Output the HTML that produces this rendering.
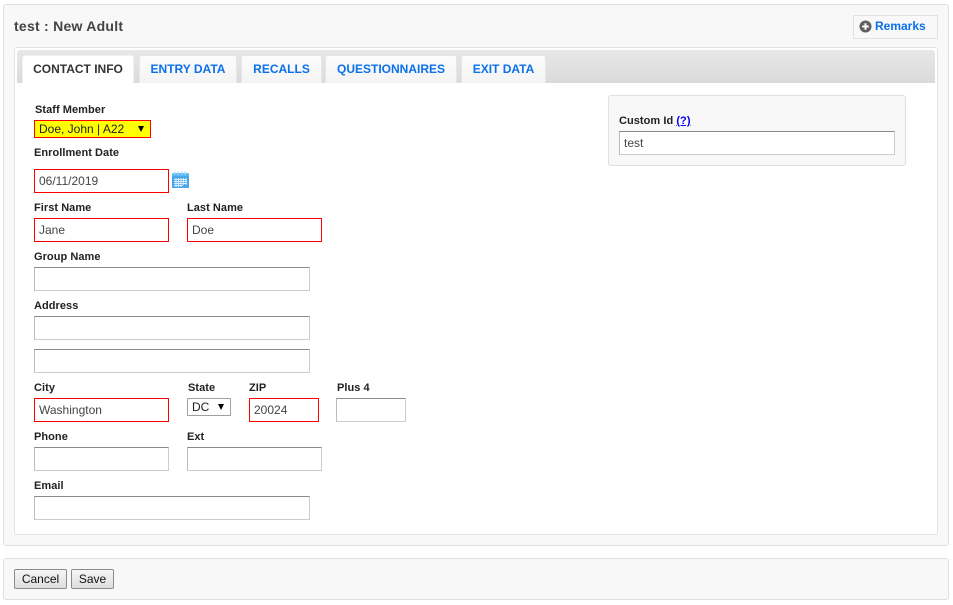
<!DOCTYPE html>
<html>
<head>
<meta charset="utf-8">
<style>
html,body{margin:0;padding:0;background:#fff;width:953px;height:605px;overflow:hidden}
body{position:relative;font-family:"Liberation Sans",Arial,sans-serif;font-size:12px;color:#333}
.a,.p,.l,.i,.t,.s,.b{position:absolute;box-sizing:border-box}
.p{background:#f8f8f8;border:1px solid #e0e0e0;border-radius:3px}
.l{font-weight:bold;font-size:11px;line-height:14px;height:14px;margin-top:1px;color:#222;letter-spacing:.05px;white-space:nowrap}
.i{height:24px;background:#fff;border:1px solid #cdcdcd;border-top-color:#8a8a8a;border-left-color:#bcbcbc;line-height:22px;padding-left:4px;color:#444;font-size:12px}
.r{border:1px solid #f00}
.t{top:55px;height:28px;background:linear-gradient(#fcfcfc,#f4f4f4);border:1px solid #e6e6e6;border-bottom:0;border-radius:3px 3px 0 0;text-align:center;font-weight:bold;font-size:12px;line-height:26px;color:#0b70ea;letter-spacing:0;white-space:nowrap}
.s{font-size:12px;line-height:16px;white-space:nowrap;color:#222}
.b{top:569px;height:20px;background:linear-gradient(#f6f6f6,#dedede);border:1px solid #8c8c8c;border-radius:2px;text-align:center;line-height:18px;font-size:12px;color:#111}
</style>
</head>
<body>
<div class="p" style="left:3px;top:4px;width:946px;height:542px"></div>
<div class="a" style="left:14px;top:19px;font-weight:bold;font-size:14px;line-height:15px;color:#444;letter-spacing:.25px;white-space:nowrap">test : New Adult</div>

<div class="a" style="left:853px;top:15px;width:85px;height:24px;border:1px solid #e2e2e2;background:#f8f8f8"></div>
<svg class="a" style="left:859px;top:20px" width="13" height="13" viewBox="0 0 13 13"><circle cx="6.5" cy="6.5" r="6" fill="#5f5f5f"/><path d="M6.5 3.2v6.6M3.2 6.5h6.6" stroke="#fff" stroke-width="2"/></svg>
<div class="a" style="left:875px;top:19px;font-weight:bold;font-size:12px;line-height:15px;color:#0b70ea;white-space:nowrap">Remarks</div>

<div class="a" style="left:14px;top:47px;width:924px;height:488px;background:#fff;border:1px solid #e2e2e2;border-radius:3px"></div>
<div class="a" style="left:17px;top:50px;width:918px;height:33px;background:linear-gradient(#e8e8e8,#dadada);border-radius:3px 3px 0 0"></div>

<div class="t" style="left:22px;width:112px;background:#fff;color:#333;border-color:#f0f0f0">CONTACT INFO</div>
<div class="t" style="left:139px;width:98px">ENTRY DATA</div>
<div class="t" style="left:241px;width:81px">RECALLS</div>
<div class="t" style="left:325px;width:132px">QUESTIONNAIRES</div>
<div class="t" style="left:461px;width:85px">EXIT DATA</div>

<div class="l" style="left:35px;top:102px">Staff Member</div>
<div class="a" style="left:34px;top:120px;width:117px;height:18px;background:#ff0;border:1px solid #f00"></div>
<div class="s" style="left:39px;top:121px">Doe, John | A22</div>
<svg class="a" style="left:138px;top:126px" width="6" height="6" viewBox="0 0 6 6"><path d="M0 0h6L3 6z" fill="#000"/></svg>

<div class="l" style="left:34px;top:145px">Enrollment Date</div>
<div class="i r" style="left:34px;top:169px;width:135px">06/11/2019</div>
<svg class="a" style="left:172px;top:171px" width="17" height="17" viewBox="0 0 17 17">
<rect x="0" y="2" width="17" height="15" rx="1" fill="#62b8f2"/>
<rect x="0" y="5" width="17" height="12" fill="#4ba6ec"/>
<path d="M2.500 0.500v3M6 0.500v3M9.500 0.500v3M13 0.500v3" stroke="#a8dcfa" stroke-width="1.5"/>
<path d="M2 8.500h13M2 10.500h13M2 12.500h13M2 14.500h9M4 7v9M6.500 7v9M9 7v9M11.500 7v7M14 7v7" stroke="#d8edfc" stroke-width="1"/>
</svg>

<div class="l" style="left:34px;top:200px">First Name</div>
<div class="l" style="left:187px;top:200px">Last Name</div>
<div class="i r" style="left:34px;top:218px;width:135px">Jane</div>
<div class="i r" style="left:187px;top:218px;width:135px">Doe</div>

<div class="l" style="left:34px;top:249px">Group Name</div>
<div class="i" style="left:34px;top:267px;width:276px"></div>

<div class="l" style="left:34px;top:298px">Address</div>
<div class="i" style="left:34px;top:316px;width:276px"></div>
<div class="i" style="left:34px;top:349px;width:276px"></div>

<div class="l" style="left:34px;top:380px">City</div>
<div class="l" style="left:188px;top:380px">State</div>
<div class="l" style="left:249px;top:380px">ZIP</div>
<div class="l" style="left:337px;top:380px">Plus 4</div>
<div class="i r" style="left:34px;top:398px;width:135px">Washington</div>
<div class="a" style="left:187px;top:398px;width:44px;height:18px;background:#fff;border:1px solid #a0a0a0;border-radius:1px"></div>
<div class="s" style="left:192px;top:399px">DC</div>
<svg class="a" style="left:218px;top:404px" width="6" height="6" viewBox="0 0 6 6"><path d="M0 0h6L3 6z" fill="#000"/></svg>
<div class="i r" style="left:249px;top:398px;width:70px">20024</div>
<div class="i" style="left:336px;top:398px;width:70px"></div>

<div class="l" style="left:34px;top:429px">Phone</div>
<div class="l" style="left:187px;top:429px">Ext</div>
<div class="i" style="left:34px;top:447px;width:135px"></div>
<div class="i" style="left:187px;top:447px;width:135px"></div>

<div class="l" style="left:34px;top:478px">Email</div>
<div class="i" style="left:34px;top:496px;width:276px"></div>

<div class="p" style="left:608px;top:95px;width:298px;height:71px"></div>
<div class="l" style="left:619px;top:113px">Custom Id <span style="color:#00e;text-decoration:underline">(?)</span></div>
<div class="i" style="left:619px;top:131px;width:276px">test</div>

<div class="p" style="left:3px;top:558px;width:946px;height:42px"></div>
<div class="b" style="left:14px;width:53px">Cancel</div>
<div class="b" style="left:71px;width:43px">Save</div>
</body>
</html>
